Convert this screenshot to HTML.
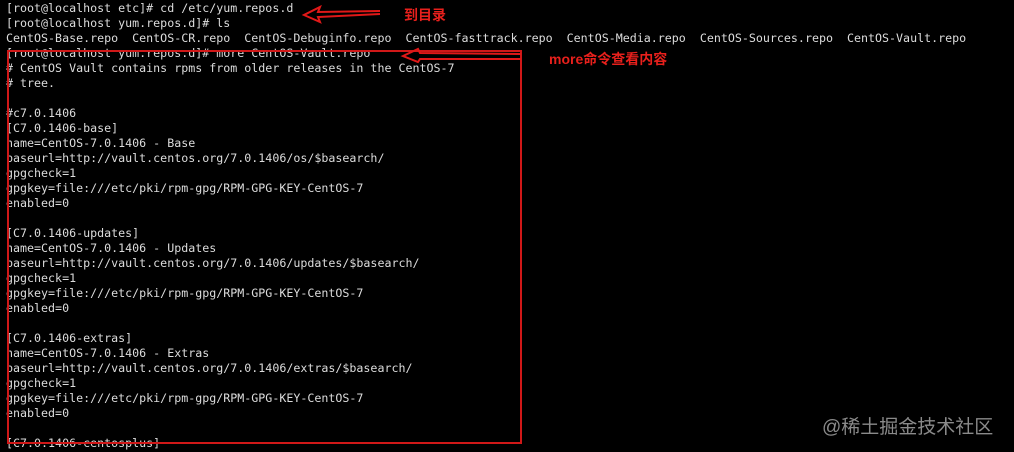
<!DOCTYPE html>
<html><head><meta charset="utf-8"><style>
html,body{margin:0;padding:0;background:#000;width:1014px;height:452px;overflow:hidden;position:relative}
pre{margin:0;position:absolute;left:6px;top:1px;font-family:"DejaVu Sans Mono","Liberation Mono",monospace;font-size:11.65px;line-height:15px;color:#dcdcdc;white-space:pre}
.lbl{position:absolute;color:#e8201c;font-weight:bold;font-family:"Liberation Sans","Noto Sans CJK SC",sans-serif;font-size:14px;line-height:16px}
.wm{position:absolute;left:822px;top:412px;color:#8a8a8a;font-family:"Liberation Sans","Noto Sans CJK SC",sans-serif;font-size:19px}
</style></head><body>
<pre>[root@localhost etc]# cd /etc/yum.repos.d
[root@localhost yum.repos.d]# ls
CentOS-Base.repo  CentOS-CR.repo  CentOS-Debuginfo.repo  CentOS-fasttrack.repo  CentOS-Media.repo  CentOS-Sources.repo  CentOS-Vault.repo
[root@localhost yum.repos.d]# more CentOS-Vault.repo
# CentOS Vault contains rpms from older releases in the CentOS-7
# tree.

#c7.0.1406
[C7.0.1406-base]
name=CentOS-7.0.1406 - Base
baseurl=http://vault.centos.org/7.0.1406/os/$basearch/
gpgcheck=1
gpgkey=file:///etc/pki/rpm-gpg/RPM-GPG-KEY-CentOS-7
enabled=0

[C7.0.1406-updates]
name=CentOS-7.0.1406 - Updates
baseurl=http://vault.centos.org/7.0.1406/updates/$basearch/
gpgcheck=1
gpgkey=file:///etc/pki/rpm-gpg/RPM-GPG-KEY-CentOS-7
enabled=0

[C7.0.1406-extras]
name=CentOS-7.0.1406 - Extras
baseurl=http://vault.centos.org/7.0.1406/extras/$basearch/
gpgcheck=1
gpgkey=file:///etc/pki/rpm-gpg/RPM-GPG-KEY-CentOS-7
enabled=0

[C7.0.1406-centosplus]</pre>
<svg width="1014" height="452" style="position:absolute;left:0;top:0" fill="none" stroke="#e01818" stroke-width="2">
<rect x="8" y="51" width="513" height="392" stroke="#d01818"/>
<path d="M380 11 L318 12 L320 7 L304 15 L320 22 L318 17 L380 14"/>
<path d="M521 54 L420 53 L418 49 L403 56 L418 62 L420 59 L521 59"/>
</svg>
<div class="lbl" style="left:404px;top:7px">到目录</div>
<div class="lbl" style="left:549px;top:51px">more命令查看内容</div>
<div class="wm">@稀土掘金技术社区</div>
</body></html>
